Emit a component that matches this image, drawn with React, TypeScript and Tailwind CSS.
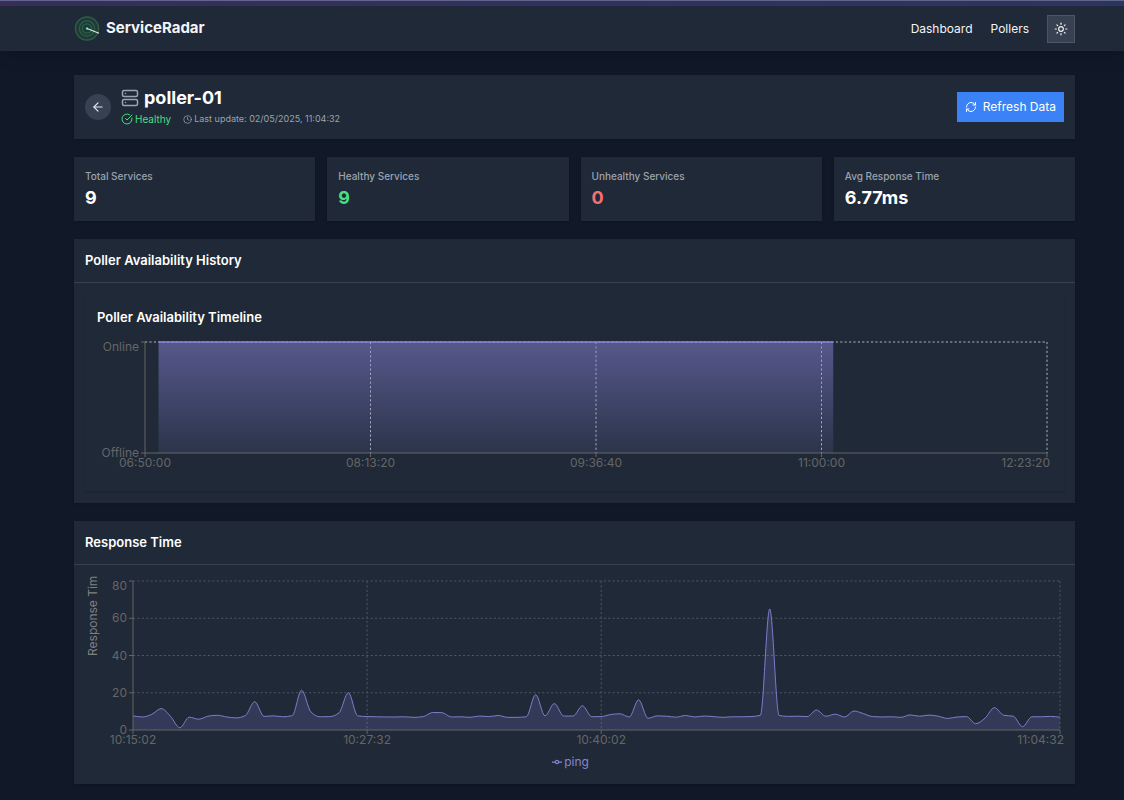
import { useLayoutEffect, useRef, useState } from 'react'
import type { ReactNode } from 'react'
import { ArrowLeft, CircleCheckBig, Clock, RefreshCw, Server, Sun } from 'lucide-react'

interface Stat {
    label: string;
    value: string;
    color: string;
}

const stats: Stat[] = [
    { label: 'Total Services', value: '9', color: 'text-white' },
    { label: 'Healthy Services', value: '9', color: 'text-[#4ade80]' },
    { label: 'Unhealthy Services', value: '0', color: 'text-[#f87171]' },
    { label: 'Avg Response Time', value: '6.77ms', color: 'text-white' },
];

// one ping sample every 30 seconds, in ms
const pings = [
    7.6, 7.0, 8.4, 11.5, 7.4, 1.2, 6.9, 5.8, 7.4, 7.9,
    7.0, 6.5, 7.8, 15.2, 7.3, 7.6, 7.1, 7.7, 21.3, 9.7,
    7.1, 7.2, 9.2, 20.0, 7.6, 7.2, 7.1, 7.0, 7.0, 7.1,
    6.8, 7.2, 9.4, 9.3, 7.0, 7.1, 6.8, 7.5, 7.2, 7.8,
    6.8, 6.8, 7.1, 19.0, 7.6, 14.2, 7.5, 7.5, 13.0, 7.1,
    7.2, 8.3, 8.7, 7.0, 16.2, 6.3, 7.6, 7.4, 6.9, 7.8,
    7.0, 7.5, 7.2, 6.8, 7.1, 7.1, 7.2, 7.9, 65.0, 7.8,
    7.3, 7.4, 7.2, 10.7, 7.4, 8.5, 7.0, 10.2, 8.8, 7.2,
    7.0, 7.1, 6.8, 8.1, 7.4, 8.0, 7.4, 6.2, 7.0, 7.2,
    3.4, 6.4, 12.0, 7.9, 7.4, 1.8, 7.1, 7.1, 7.3, 6.9,
];

const useWidth = (initial: number) => {
    const ref = useRef<HTMLDivElement>(null);
    const [width, setWidth] = useState(initial);

    useLayoutEffect(() => {
        const el = ref.current;
        if (!el) return;
        const update = () => setWidth(el.clientWidth);
        update();
        const observer = new ResizeObserver(update);
        observer.observe(el);
        return () => observer.disconnect();
    }, []);

    return { ref, width };
};

// monotone cubic through equally spaced points
const monotonePath = (points: number[][]) => {
    const step = points[1][0] - points[0][0];
    const slopes = points.slice(1).map((p, i) => (p[1] - points[i][1]) / step);
    const tangents = points.map((_, i) => {
        if (i === 0) return slopes[0];
        if (i === points.length - 1) return slopes[i - 1];
        const a = slopes[i - 1];
        const b = slopes[i];
        if (a * b <= 0) return 0;
        return Math.sign(a) * Math.min(2 * Math.abs(a), 2 * Math.abs(b), Math.abs(a + b) / 2);
    });

    return points.map(([x, y], i) => {
        if (i === 0) return `M${x},${y}`;
        const [px, py] = points[i - 1];
        const third = step / 3;
        return `C${px + third},${py + tangents[i - 1] * third} ${x - third},${y - tangents[i] * third} ${x},${y}`;
    }).join('');
};

const Logo = () => (
    <svg viewBox="0 0 26 26" className="h-[26px] w-[26px]" fill="none" aria-hidden="true">
        <circle cx="13" cy="12.5" r="12" fill="#22c55e" fillOpacity="0.1" />
        <g stroke="#2f6b42" strokeOpacity="0.8" strokeWidth="1.4">
            <circle cx="13" cy="12.5" r="11.5" />
            <circle cx="13" cy="12.5" r="7.6" />
            <circle cx="13" cy="12.5" r="4.6" />
        </g>
        <circle cx="13" cy="12.5" r="1.2" fill="#4ade80" />
        <path d="M13 12.5 25 17.2" stroke="#e5e7eb" strokeWidth="1.1" />
    </svg>
);

const Header = () => (
    <header className="bg-[#1f2937] shadow-lg">
        <div className="h-1.5 border-t border-[#62648a] bg-linear-to-r from-[#382d5c] to-[#2a3662]" />
        <div className="flex h-[45px] items-center justify-between pr-[49px] pl-[74px]">
            <a href="#" className="flex items-center gap-1.5 text-[15px] font-bold text-[#f3f4f6]">
                <Logo />
                ServiceRadar
            </a>
            <nav className="flex items-center gap-[18px] text-[12px] text-[#f3f4f6]">
                <a href="#dashboard">Dashboard</a>
                <a href="#pollers">Pollers</a>
                <button
                    aria-label="Toggle theme"
                    className="flex h-7 w-7 items-center justify-center border border-[#4b5563] bg-[#374151]"
                >
                    <Sun className="h-3.5 w-3.5" />
                </button>
            </nav>
        </div>
    </header>
);

const PollerSummary = () => (
    <section className="flex items-center justify-between bg-[#1f2937] p-[11px] shadow">
        <div className="flex items-center gap-2.5">
            <button
                aria-label="Back"
                className="flex h-[26px] w-[26px] items-center justify-center rounded-full bg-[#374151] text-[#e5e7eb]"
            >
                <ArrowLeft className="h-3.5 w-3.5" />
            </button>
            <div>
                <h1 className="flex items-center gap-[5px] text-[18px] leading-6 font-bold text-white">
                    <Server className="h-[18px] w-[18px] text-[#9ca3af]" />
                    poller-01
                </h1>
                <div className="flex items-center gap-3 leading-[18px]">
                    <span className="flex items-center gap-0.5 text-[10px] text-[#4ade80]">
                        <CircleCheckBig className="h-3 w-3" />
                        Healthy
                    </span>
                    <span className="flex items-center gap-0.5 text-[9px] text-[#9ca3af]">
                        <Clock className="h-[9px] w-[9px]" />
                        Last update: 02/05/2025, 11:04:32
                    </span>
                </div>
            </div>
        </div>
        <button className="flex h-[30px] items-center gap-1.5 bg-[#3b82f6] px-2 text-[12px] text-white">
            <RefreshCw className="h-3 w-3" />
            Refresh Data
        </button>
    </section>
);

interface PanelProps {
    title: string;
    children: ReactNode;
}

const Panel = ({ title, children }: PanelProps) => (
    <section className="bg-[#1f2937] shadow">
        <h2 className="border-b border-[#374151] px-[11px] py-3 text-[13px] leading-[19px] font-semibold text-white">
            {title}
        </h2>
        {children}
    </section>
);

const AvailabilityChart = () => {
    const { ref, width } = useWidth(955);
    const left = 48;
    const right = width - 5;
    const top = 5;
    const bottom = 116;
    const span = right - left;
    const ticks = ['06:50:00', '08:13:20', '09:36:40', '11:00:00', '12:23:20'];
    const start = left + span * 0.015;
    const end = left + span * 0.763;

    return (
        <div ref={ref}>
            <svg width={width} height={142} className="block overflow-visible text-[12px]" role="img" aria-label="Poller availability">
                <defs>
                    <linearGradient id="availability" x1="0" y1="0" x2="0" y2="1">
                        <stop offset="5%" stopColor="#8884d8" stopOpacity={0.5} />
                        <stop offset="95%" stopColor="#8884d8" stopOpacity={0.14} />
                    </linearGradient>
                </defs>
                <g stroke="#cccccc" strokeOpacity={0.85} strokeDasharray="2.2 2.2">
                    <line x1={left} y1={top} x2={right} y2={top} />
                    {ticks.slice(1).map((tick, i) => {
                        const x = left + (span * (i + 1)) / 4;
                        return <line key={tick} x1={x} y1={top} x2={x} y2={bottom} />;
                    })}
                </g>
                <rect x={start} y={top} width={end - start} height={bottom - top} fill="url(#availability)" />
                <line x1={start} y1={top} x2={end} y2={top} stroke="#8884d8" strokeWidth={1.5} />
                <g stroke="#666666">
                    <line x1={left} y1={top} x2={left} y2={bottom} />
                    <line x1={left} y1={bottom} x2={right} y2={bottom} />
                    <line x1={left - 4} y1={top} x2={left} y2={top} />
                    <line x1={left - 4} y1={bottom} x2={left} y2={bottom} />
                    {ticks.map((tick, i) => {
                        const x = left + (span * i) / 4;
                        return <line key={tick} x1={x} y1={bottom} x2={x} y2={bottom + 4} />;
                    })}
                </g>
                <g fill="#666666">
                    <text x={left - 6} y={14} textAnchor="end">Online</text>
                    <text x={left - 6} y={120} textAnchor="end">Offline</text>
                    {ticks.map((tick, i) => (
                        <text
                            key={tick}
                            x={i === 4 ? right + 3 : left + (span * i) / 4}
                            y={130}
                            textAnchor={i === 4 ? 'end' : 'middle'}
                        >
                            {tick}
                        </text>
                    ))}
                </g>
            </svg>
        </div>
    );
};

const ResponseChart = () => {
    const { ref, width } = useWidth(979);
    const left = 48;
    const right = width - 4;
    const top = 4;
    const bottom = 153;
    const span = right - left;
    const xAt = (i: number) => left + (span * i) / (pings.length - 1);
    const yAt = (value: number) => bottom - ((bottom - top) * value) / 80;
    const line = monotonePath(pings.map((value, i) => [xAt(i), yAt(value)]));
    const times = [
        { label: '10:15:02', index: 0 },
        { label: '10:27:32', index: 25 },
        { label: '10:40:02', index: 50 },
        { label: '11:04:32', index: 99 },
    ];

    return (
        <div ref={ref}>
            <svg width={width} height={175} className="block overflow-visible text-[12px]" role="img" aria-label="Response time">
                <g stroke="#4b5563" strokeDasharray="2.2 2.2">
                    {[20, 40, 60, 80].map((value) => (
                        <line key={value} x1={left} y1={yAt(value)} x2={right} y2={yAt(value)} />
                    ))}
                    {times.slice(1).map(({ label, index }) => (
                        <line key={label} x1={xAt(index)} y1={top} x2={xAt(index)} y2={bottom} />
                    ))}
                </g>
                <path d={`${line}L${right},${bottom}L${left},${bottom}Z`} fill="#8884d8" fillOpacity={0.2} />
                <path d={line} fill="none" stroke="#8884d8" strokeWidth={0.9} />
                <g stroke="#666666">
                    <line x1={left} y1={top} x2={left} y2={bottom} />
                    <line x1={left} y1={bottom} x2={right} y2={bottom} />
                    {[0, 20, 40, 60, 80].map((value) => (
                        <line key={value} x1={left - 4} y1={yAt(value)} x2={left} y2={yAt(value)} />
                    ))}
                    {times.map(({ label, index }) => (
                        <line key={label} x1={xAt(index)} y1={bottom} x2={xAt(index)} y2={bottom + 4} />
                    ))}
                </g>
                <g fill="#666666">
                    {[0, 20, 40, 60, 80].map((value) => (
                        <text key={value} x={left - 6} y={value === 80 ? 13 : yAt(value) + 4} textAnchor="end">
                            {value}
                        </text>
                    ))}
                    {times.map(({ label, index }) => (
                        <text
                            key={label}
                            x={index === 99 ? right + 4 : xAt(index)}
                            y={167}
                            textAnchor={index === 99 ? 'end' : 'middle'}
                        >
                            {label}
                        </text>
                    ))}
                </g>
                <text transform="translate(12 79) rotate(-90)" fill="#808080">Response Tim</text>
            </svg>
            <div className="flex h-5 items-center justify-center gap-0.5 pr-2 text-[12px] text-[#8884d8]">
                <svg viewBox="0 0 32 32" className="h-2.5 w-2.5" fill="none" stroke="currentColor" strokeWidth={4} aria-hidden="true">
                    <path d="M0 16h10.7a5.3 5.3 0 1 1 10.6 0H32M21.3 16a5.3 5.3 0 1 1-10.6 0" />
                </svg>
                ping
            </div>
        </div>
    );
};

const App = () => {
    return (
        <div className="min-h-screen bg-[#111827] font-[Inter,sans-serif]">
            <Header />
            <main className="space-y-[18px] pt-6 pr-[49px] pb-4 pl-[74px]">
                <PollerSummary />
                <div className="grid grid-cols-4 gap-3">
                    {stats.map((stat) => (
                        <div key={stat.label} className="bg-[#1f2937] p-[11px] shadow">
                            <h3 className="text-[10px] leading-4 font-medium text-[#9ca3af]">{stat.label}</h3>
                            <p className={`mt-0.5 text-[18px] leading-6 font-bold ${stat.color}`}>{stat.value}</p>
                        </div>
                    ))}
                </div>
                <Panel title="Poller Availability History">
                    <div className="px-[11px] py-3">
                        <div className="p-3 shadow-sm">
                            <h3 className="mb-2.5 text-[13px] leading-5 font-semibold text-white">
                                Poller Availability Timeline
                            </h3>
                            <AvailabilityChart />
                        </div>
                    </div>
                </Panel>
                <Panel title="Response Time">
                    <div className="px-[11px] py-3">
                        <ResponseChart />
                    </div>
                </Panel>
            </main>
        </div>
    )
}

export default App
